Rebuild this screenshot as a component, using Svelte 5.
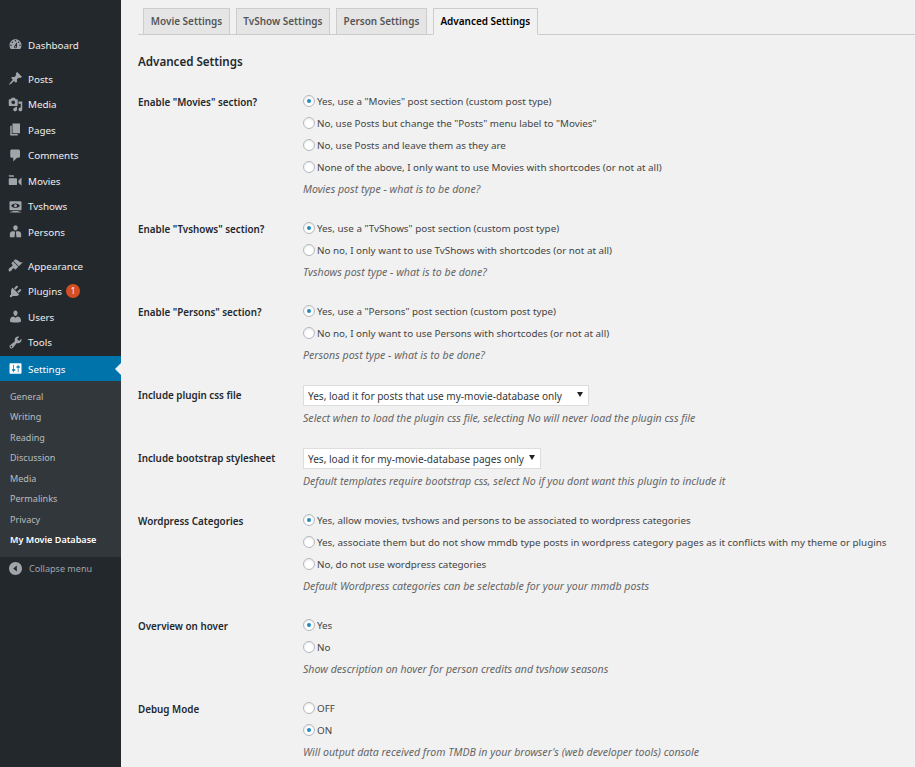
<script>
  const icons = {
    dashboard: 'M3.76 16h12.48c1.1-1.37 1.76-3.11 1.76-5 0-4.42-3.58-8-8-8s-8 3.58-8 8c0 1.89.66 3.63 1.76 5zM10 4c.55 0 1 .45 1 1s-.45 1-1 1-1-.45-1-1 .45-1 1-1zM6 6c.55 0 1 .45 1 1s-.45 1-1 1-1-.45-1-1 .45-1 1-1zm8 0c.55 0 1 .45 1 1s-.45 1-1 1-1-.45-1-1 .45-1 1-1zm-5.37 5.55L12 7v6c0 1.1-.9 2-2 2s-2-.9-2-2c0-.57.24-1.08.63-1.45zM4 10c.55 0 1 .45 1 1s-.45 1-1 1-1-.45-1-1 .45-1 1-1zm12 0c.55 0 1 .45 1 1s-.45 1-1 1-1-.45-1-1 .45-1 1-1zm-5 3c0-.55-.45-1-1-1s-1 .45-1 1 .45 1 1 1 1-.45 1-1z',
    posts: 'M10.44 3.02l1.82-1.82 6.36 6.35-1.83 1.82c-1.05-.68-2.48-.57-3.41.36l-.75.75c-.92.93-1.04 2.35-.35 3.41l-1.83 1.82-2.41-2.41-2.8 2.79c-.42.42-3.38 2.71-3.8 2.29s1.86-3.39 2.28-3.81l2.79-2.79L4.1 9.36l1.83-1.82c1.05.69 2.48.57 3.4-.36l.75-.75c.93-.92 1.05-2.35.36-3.41z',
    media: 'M13 11V4c0-.55-.45-1-1-1h-1.67L9 1H5L3.67 3H2c-.55 0-1 .45-1 1v7c0 .55.45 1 1 1h10c.55 0 1-.45 1-1zM7 4.5c1.38 0 2.5 1.12 2.5 2.5S8.38 9.5 7 9.5 4.5 8.38 4.5 7 5.62 4.5 7 4.5zM14 6h5v10.5c0 1.38-1.12 2.5-2.5 2.5S14 17.88 14 16.5s1.12-2.5 2.5-2.5c.17 0 .34.02.5.05V9h-3V6zm-4 8.05V13h2v3.5c0 1.38-1.12 2.5-2.5 2.5S7 17.88 7 16.5 8.12 14 9.5 14c.17 0 .34.02.5.05z',
    pages: 'M6 15V2h10v13H6zm-1 1h8v2H3V5h2v11z',
    comments: 'M5 2h9c1.1 0 2 .9 2 2v7c0 1.1-.9 2-2 2h-2l-5 5v-5H5c-1.1 0-2-.9-2-2V4c0-1.1.9-2 2-2z',
    movies: 'M1 3h6c.5 0 1 .4 1 1v1H2C1.4 5 1 4.4 1 3.8V3zM2 7h9c.6 0 1 .4 1 1v7c0 .6-.4 1-1 1H2c-.6 0-1-.4-1-1V8c0-.6.4-1 1-1zm12 3l4-4v11l-4-4v-3z',
    tv: 'M18 14V4c0-.55-.45-1-1-1H3c-.55 0-1 .45-1 1v10c0 .55.45 1 1 1h14c.55 0 1-.45 1-1zm-8-8c2.3 0 4.4 1.14 6 3-1.6 1.86-3.7 3-6 3s-4.4-1.14-6-3c1.6-1.86 3.7-3 6-3zm2 3c0-1.1-.9-2-2-2s-2 .9-2 2 .9 2 2 2 2-.9 2-2zm2 8h3v1H3v-1h3v-1h8v1z',
    persons: 'M10 1.5c1.9 0 3 1.5 3 3.2S11.9 8.7 10 8.7 7 6.4 7 4.7s1.1-3.2 3-3.2zM6 9.5h2.6L9.4 11l-.7 6.5H2.5v-4.3c0-2 1.6-3.7 3.5-3.7zm5 0h3c1.9 0 3.5 1.7 3.5 3.7v4.3h-6.2l-.7-6.5.4-1.5z',
    appearance: 'M14.48 11.06L7.41 3.99l1.5-1.5c.5-.56 2.3-.47 3.51.32 1.21.8 1.43 1.28 2.91 2.1 1.18.64 2.45 1.26 4.45.85zm-.71.71L6.7 4.7 4.93 6.47c-.39.39-.39 1.02 0 1.41l1.06 1.06c.39.39.39 1.03 0 1.42-.6.6-1.43 1.11-2.21 1.69-.35.26-.7.53-1.01.84C1.43 13.23.4 14.22 1 17.2c.6 1.2 1.9 1.2 3.17-.09.31-.31.58-.66.84-1.01.58-.78 1.09-1.61 1.69-2.21.39-.39 1.03-.39 1.42 0l1.06 1.06c.39.39 1.02.39 1.41 0z',
    plugins: 'M13.11 4.36L9.87 7.6 8 5.73l3.24-3.24c.35-.34 1.05-.2 1.56.32.52.51.66 1.21.31 1.55zm-8 1.77l.91-1.12 9.01 9.01-1.19.84c-.71.71-2.63 1.16-3.82 1.16H6.14L4.9 17.26c-.59.59-1.54.59-2.12 0-.59-.58-.59-1.53 0-2.12l1.24-1.24v-3.88c0-1.13.4-3.19 1.09-3.89zm7.26 3.97l3.24-3.24c.34-.35 1.04-.21 1.55.31.52.51.66 1.21.31 1.55l-3.24 3.25z',
    users: 'M10 9.25c-2.27 0-2.73-3.44-2.73-3.44C7 4.02 7.82 2 9.97 2c2.16 0 2.98 2.02 2.71 3.81 0 0-.41 3.44-2.68 3.44zm0 2.57L12.72 10c2.39 0 4.52 2.33 4.52 4.53v2.49s-3.65 1.13-7.24 1.13c-3.65 0-7.24-1.13-7.24-1.13v-2.49c0-2.25 1.94-4.48 4.47-4.48z',
    tools: 'M16.68 9.77c-1.34 1.34-3.3 1.67-4.95.99l-5.41 6.52c-.99.99-2.59.99-3.58 0s-.99-2.59 0-3.57l6.52-5.42c-.68-1.65-.35-3.61.99-4.95 1.28-1.28 3.12-1.62 4.72-1.06l-2.89 2.89 2.82 2.82 2.86-2.87c.53 1.58.18 3.39-1.08 4.67zM3.81 16.21c.4.39 1.04.39 1.43 0 .4-.4.4-1.04 0-1.43-.39-.4-1.03-.4-1.43 0-.39.39-.39 1.03 0 1.43z',
    settings: 'M18 16V4c0-.55-.45-1-1-1H3c-.55 0-1 .45-1 1v12c0 .55.45 1 1 1h14c.55 0 1-.45 1-1zM8 11h1c.55 0 1 .45 1 1s-.45 1-1 1H8v1.5c0 .28-.22.5-.5.5s-.5-.22-.5-.5V13H6c-.55 0-1-.45-1-1s.45-1 1-1h1V5.5c0-.28.22-.5.5-.5s.5.22.5.5V11zm5-2h-1c-.55 0-1-.45-1-1s.45-1 1-1h1V5.5c0-.28.22-.5.5-.5s.5.22.5.5V7h1c.55 0 1 .45 1 1s-.45 1-1 1h-1v5.5c0 .28-.22.5-.5.5s-.5-.22-.5-.5V9z',
    collapse: 'M10 20c5.52 0 10-4.48 10-10S15.52 0 10 0 0 4.48 0 10s4.48 10 10 10zm2-5.5L6.5 10 12 5.5v9z'
  }

  const menu = [
    [{ label: 'Dashboard', icon: 'dashboard' }],
    [
      { label: 'Posts', icon: 'posts' },
      { label: 'Media', icon: 'media' },
      { label: 'Pages', icon: 'pages' },
      { label: 'Comments', icon: 'comments' },
      { label: 'Movies', icon: 'movies' },
      { label: 'Tvshows', icon: 'tv' },
      { label: 'Persons', icon: 'persons' }
    ],
    [
      { label: 'Appearance', icon: 'appearance' },
      { label: 'Plugins', icon: 'plugins', badge: 1 },
      { label: 'Users', icon: 'users' },
      { label: 'Tools', icon: 'tools' },
      { label: 'Settings', icon: 'settings', current: true }
    ]
  ]

  const submenu = ['General', 'Writing', 'Reading', 'Discussion', 'Media', 'Permalinks', 'Privacy', 'My Movie Database']
  const tabs = ['Movie Settings', 'TvShow Settings', 'Person Settings', 'Advanced Settings']

  const rows = [
    {
      label: 'Enable "Movies" section?',
      options: [
        'Yes, use a "Movies" post section (custom post type)',
        'No, use Posts but change the "Posts" menu label to "Movies"',
        'No, use Posts and leave them as they are',
        'None of the above, I only want to use Movies with shortcodes (or not at all)'
      ],
      checked: 0,
      desc: 'Movies post type - what is to be done?'
    },
    {
      label: 'Enable "Tvshows" section?',
      options: ['Yes, use a "TvShows" post section (custom post type)', 'No no, I only want to use TvShows with shortcodes (or not at all)'],
      checked: 0,
      desc: 'Tvshows post type - what is to be done?'
    },
    {
      label: 'Enable "Persons" section?',
      options: ['Yes, use a "Persons" post section (custom post type)', 'No no, I only want to use Persons with shortcodes (or not at all)'],
      checked: 0,
      desc: 'Persons post type - what is to be done?'
    },
    {
      label: 'Include plugin css file',
      select: 'Yes, load it for posts that use my-movie-database only',
      width: 286,
      desc: 'Select when to load the plugin css file, selecting No will never load the plugin css file'
    },
    {
      label: 'Include bootstrap stylesheet',
      select: 'Yes, load it for my-movie-database pages only',
      width: 238,
      desc: 'Default templates require bootstrap css, select No if you dont want this plugin to include it'
    },
    {
      label: 'Wordpress Categories',
      options: [
        'Yes, allow movies, tvshows and persons to be associated to wordpress categories',
        'Yes, associate them but do not show mmdb type posts in wordpress category pages as it conflicts with my theme or plugins',
        'No, do not use wordpress categories'
      ],
      checked: 0,
      desc: 'Default Wordpress categories can be selectable for your your mmdb posts'
    },
    {
      label: 'Overview on hover',
      options: ['Yes', 'No'],
      checked: 0,
      desc: 'Show description on hover for person credits and tvshow seasons'
    },
    {
      label: 'Debug Mode',
      options: ['OFF', 'ON'],
      checked: 1,
      desc: "Will output data received from TMDB in your browser's (web developer tools) console"
    }
  ]
</script>

<div class="page">
  <aside class="sidebar">
    <nav class="menu">
      {#each menu as group}
        <ul class="group">
          {#each group as item}
            <li class="item" class:current={item.current}>
              <svg class="icon" viewBox="0 0 20 20"><path d={icons[item.icon]} /></svg>
              <span>{item.label}</span>
              {#if item.badge}<span class="badge">{item.badge}</span>{/if}
            </li>
          {/each}
        </ul>
      {/each}
    </nav>
    <ul class="submenu">
      {#each submenu as name, i}
        <li class:active={i === submenu.length - 1}>{name}</li>
      {/each}
    </ul>
    <div class="collapse">
      <svg class="icon" viewBox="0 0 20 20"><path d={icons.collapse} /></svg>
      <span>Collapse menu</span>
    </div>
  </aside>

  <main class="content">
    <div class="tabs">
      {#each tabs as tab, i}
        <span class="tab" class:on={i === tabs.length - 1}>{tab}</span>
      {/each}
    </div>
    <h2>Advanced Settings</h2>

    <div class="form">
      {#each rows as row}
        <div class="label">{row.label}</div>
        <div class="field">
          {#if row.select}
            <div class="select-wrap" style="width: {row.width}px">
              <select class="select"><option>{row.select}</option></select>
              <span class="arrow"></span>
            </div>
          {:else}
            {#each row.options as text, i}
              <div class="option">
                <span class="radio" class:checked={i === row.checked}></span>
                <span>{text}</span>
              </div>
            {/each}
          {/if}
          <p class="desc">{row.desc}</p>
        </div>
      {/each}
    </div>
  </main>
</div>

<style>
  :global(body) {
    background: #f1f1f1;
    font-family: "Noto Sans", "Open Sans", sans-serif;
    overflow: hidden;
  }

  ul {
    list-style: none;
    margin: 0;
    padding: 0;
  }

  .page {
    display: flex;
    height: 767px;
    overflow: hidden;
  }

  .sidebar {
    width: 121px;
    flex: none;
    background: #23282d;
    color: #eee;
    font-size: 9.83px;
    padding-top: 32px;
  }

  .group {
    margin-bottom: 8.5px;
  }

  .group:last-child {
    margin-bottom: 0;
  }

  .item {
    position: relative;
    display: flex;
    align-items: center;
    height: 25.5px;
    padding-left: 8px;
    gap: 5px;
  }

  .item .icon,
  .collapse .icon {
    width: 15px;
    height: 15px;
    flex: none;
    fill: #a0a5aa;
  }

  .item.current {
    height: 25px;
    margin-top: 1px;
    background: #0073aa;
    color: #fff;
  }

  .item.current .icon {
    fill: #fff;
  }

  .item.current::after {
    content: "";
    position: absolute;
    right: 0;
    top: 50%;
    margin-top: -6px;
    border: 6px solid transparent;
    border-right-color: #f1f1f1;
    border-left-width: 0;
  }

  .badge {
    width: 14px;
    height: 14px;
    margin-left: -1px;
    border-radius: 50%;
    background: #d54e21;
    color: #fff;
    font-size: 8px;
    line-height: 14px;
    text-align: center;
  }

  .submenu {
    background: #32373c;
    padding: 5.8px 0 6px;
    color: rgba(240, 245, 250, 0.7);
    font-size: 9.07px;
  }

  .submenu li {
    height: 20.5px;
    line-height: 20.5px;
    padding-left: 10px;
  }

  .submenu .active {
    color: #fff;
    font-weight: 600;
  }

  .collapse {
    display: flex;
    align-items: center;
    gap: 6px;
    height: 23px;
    padding-left: 8px;
    color: #a0a5aa;
    font-size: 9.07px;
  }

  .collapse .icon {
    width: 13px;
    height: 13px;
    margin: 0 1px;
  }

  .content {
    flex: 1;
    min-width: 0;
    padding: 8px 0 0 17px;
    color: #444;
    font-size: 9.83px;
  }

  .tabs {
    display: flex;
    gap: 5.5px;
    padding-left: 5px;
    border-bottom: 1px solid #ccc;
    height: 26px;
  }

  .tab {
    height: 26px;
    box-sizing: border-box;
    padding: 0 6.8px;
    background: #e5e5e5;
    border: 1px solid #ccc;
    border-bottom: 0;
    color: #555;
    font-weight: 600;
    font-size: 9.95px;
    line-height: 25px;
  }

  .tab.on {
    height: 27px;
    background: #f1f1f1;
    color: #000;
    border-bottom: 1px solid #f1f1f1;
  }

  h2 {
    margin: 0;
    padding-top: 16px;
    font-size: 11.6px;
    line-height: 22px;
    font-weight: 600;
    color: #23282d;
  }

  .form {
    display: grid;
    grid-template-columns: 164px 1fr;
    row-gap: 17px;
    margin-top: 17px;
  }

  .label {
    font-weight: 600;
    color: #23282d;
    line-height: 24px;
  }

  .option {
    display: flex;
    align-items: center;
    height: 22px;
    gap: 2px;
    white-space: nowrap;
  }

  .radio {
    box-sizing: border-box;
    width: 12px;
    height: 12px;
    margin-left: 1px;
    flex: none;
    display: flex;
    align-items: center;
    justify-content: center;
    border: 1px solid #b4b9be;
    border-radius: 50%;
    background: #fff;
    box-shadow: inset 0 1px 2px rgba(0, 0, 0, 0.1);
  }

  .radio.checked::before {
    content: "";
    width: 4px;
    height: 4px;
    border-radius: 50%;
    background: #1e8cbe;
  }

  .select-wrap {
    position: relative;
    margin: 2px 0 1px 1px;
  }

  .select {
    display: block;
    appearance: none;
    width: 100%;
    height: 21px;
    margin: 0;
    padding: 0 4px;
    border: 1px solid #ddd;
    border-radius: 0;
    background: #fff;
    color: #32373c;
    font: inherit;
    font-size: 10.05px;
  }

  .arrow {
    position: absolute;
    right: 6px;
    top: 7px;
    border: 3px solid transparent;
    border-top: 5px solid #222;
    border-bottom: 0;
  }

  .desc {
    margin: 0 0 0 1px;
    height: 22px;
    line-height: 22px;
    font-size: 10.6px;
    font-style: italic;
    color: #666;
  }
</style>
